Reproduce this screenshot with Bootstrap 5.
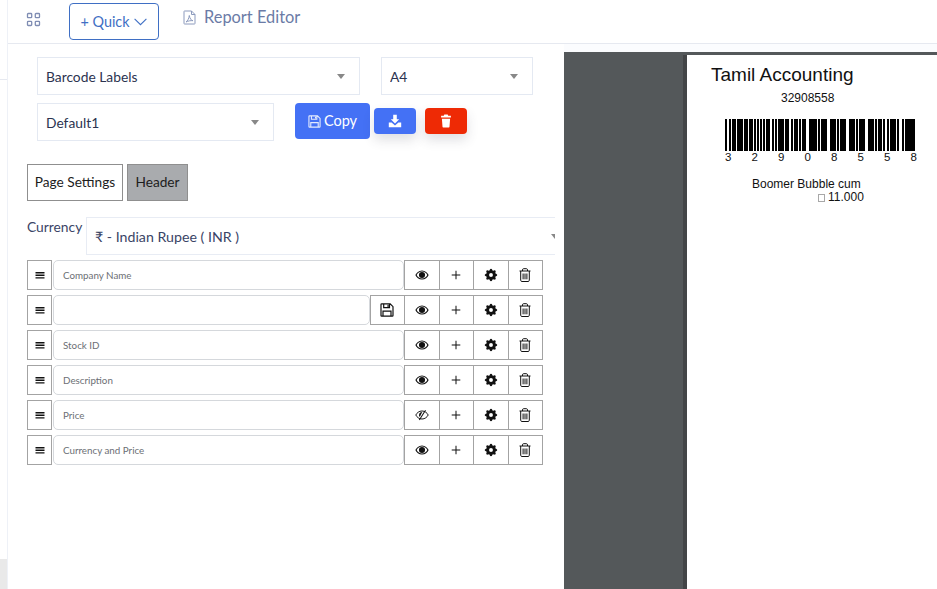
<!DOCTYPE html>
<html lang="en">
<head>
<meta charset="utf-8">
<title>Report Editor</title>
<link href="https://cdn.jsdelivr.net/npm/bootstrap@5.3.0/dist/css/bootstrap.min.css" rel="stylesheet">
<style>
html,body{height:100%;overflow:hidden}
body{width:937px;height:589px;background:#fff;font-family:"Lato","Open Sans",sans-serif;color:#2b3350;display:flex}
.rail{width:8px;flex:none;border-right:1px solid #eef1f7;display:flex;flex-direction:column}
.rail-top{height:80px;border-bottom:1px solid #e6e9f0}
.rail-fill{flex:1}
.rail-end{height:30px;width:7px;background:#e9e9e9}
.shell{flex:1;min-width:0;display:flex;flex-direction:column}
.topbar{height:44px;flex:none;border-bottom:1px solid #e6e9f0;display:flex;align-items:flex-start;background:#fff}
.apps{margin:12px 0 0 18px;width:15px;height:15px;color:#7f8db3}
.quick{margin:3px 0 0 28px;width:90px;height:37px;border:1px solid #3f6fc4;border-radius:4px;color:#3f6fc4;font-size:14.4px;padding:0;display:flex;align-items:center;justify-content:center;gap:3px;background:#fff}
.quick svg{width:15px;height:15px}
.crumb{margin:7px 0 0 24px;color:#6b7ba6;font-size:16.4px;display:flex;align-items:center;gap:8px;line-height:20px}
.crumb svg{width:13px;height:15px;color:#8c9abd}
.stage{flex:1;display:flex;min-height:0;background:#fbfcfe}
.editor{width:556px;flex:none;background:#fff;overflow:hidden}
.sel{border:1px solid #e4e9f2;border-radius:0;height:38px;padding:2px 8px 0;font-size:13.8px;color:#2b3350;font-family:inherit;background-position:right 14px center;background-size:8px 5px;background-image:url("data:image/svg+xml,%3Csvg xmlns='http://www.w3.org/2000/svg' viewBox='0 0 10 6'%3E%3Cpath fill='%23888' d='M0 0h10L5 6z'/%3E%3C/svg%3E")}
.top-row{display:flex;padding:13px 0 0 29px;gap:21px}
.second-row{display:flex;padding:8px 0 0 29px;align-items:flex-start}
.w-a{width:323px}.w-b{width:152px}.w-c{width:237px}
.copy-b{margin-left:21px;width:75px;height:36px;background:#4471f5;border:0;border-radius:4px;color:#fff;font-size:14.5px;padding:0;display:flex;align-items:center;justify-content:center;gap:3px}
.copy-b svg{width:13px;height:13px;opacity:.85}
.ico-b{margin-top:5px;width:42px;height:26px;border:0;border-radius:4px;color:#fff;padding:0;display:flex;align-items:center;justify-content:center;box-shadow:0 6px 12px rgba(60,60,80,.16)}
.ico-b svg{width:14px;height:14px}
.b-blue{background:#4471f5;margin-left:4px}
.b-red{background:#ee2a05;margin-left:9px}
.tabs-row{display:flex;gap:4px;padding:23px 0 0 19px}
.tab-b{height:37px;border:1px solid #8f8f8f;border-radius:0;background:#fff;color:#1d1d1d;font-size:13.7px;padding:0;display:flex;align-items:center;justify-content:center}
.tab-1{width:96px}.tab-2{width:61px;background:#a9abae}
.cur-row{display:flex;padding:16px 0 0 19px;gap:5px;align-items:flex-start}
.cur-label{font-size:13.8px;color:#3a4466;line-height:20px;width:54px}
.cur-sel{height:38px;width:469px;flex:none;border:1px solid #e8ecf4;border-right:0;padding:2px 8px 0;display:flex;align-items:center;font-size:14.2px;color:#3a4466;background:url("data:image/svg+xml,%3Csvg xmlns='http://www.w3.org/2000/svg' viewBox='0 0 10 6'%3E%3Cpath fill='%23888' d='M0 0h10L5 6z'/%3E%3C/svg%3E") no-repeat right -4px center/8px 5px}
.fields{padding:5px 0 0 19px;width:535px;display:flex;flex-direction:column;gap:5px}
.frow{display:flex;height:30px}
.sq{height:30px;border:1px solid #a3a3a3;background:#fff;color:#111;padding:0;border-radius:0;display:flex;align-items:center;justify-content:center;margin-left:-1px;flex:none}
.sq svg{width:14px;height:14px}
.sq-h{width:25px;margin-left:0}
.sq-a{width:35.5px}
.fin{flex:1;min-width:0;height:30px;border:1px solid #d5d8dc;border-radius:5px;font-size:9.8px;color:#6c6f75;padding:1px 9px 0;margin-left:1px;display:flex;align-items:center;background:#fff}
.frow .sq-e{margin-left:0}
.viewer{flex:1;background:#54585a;margin-top:8px;padding-top:3px;padding-left:123px;display:flex;min-width:0}
.sheet{flex:1;background:#fff;box-shadow:-4px 0 0 #434547;font-family:"Liberation Sans",Arial,sans-serif;color:#111;padding:8px 0 0 24px;min-width:0}
.s-title{font-size:19px;line-height:24px;color:#111}
.s-num{font-size:12px;line-height:14px;margin:4px 0 0 70px}
.bars{display:block;margin:14px 0 0 14px;width:190px;height:32px}
.digits{display:flex;justify-content:space-between;margin:0 0 0 14px;width:192px;font-size:11.5px;line-height:13px}
.s-name{font-size:12px;line-height:13px;margin:14px 0 0 41px}
.s-price{font-size:12px;line-height:13px;margin:0 0 0 107px;display:flex;align-items:center;gap:3px}
.tofu{width:7px;height:8px;border:1px solid #a8a8a8;display:inline-block;margin-top:1px}
</style>
</head>
<body>
<svg width="0" height="0" class="position-absolute">
<symbol id="i-bars" viewBox="0 0 14 14"><path fill="currentColor" d="M2.500 4h9v1.400h-9zM2.500 6.600h9V8h-9zM2.500 9.200h9v1.400h-9z"/></symbol>
<symbol id="i-eye" viewBox="0 0 16 16"><path fill="currentColor" d="M8 2.800C4.400 2.800 1.600 5.400.4 8c1.200 2.600 4 5.200 7.600 5.200s6.400-2.600 7.600-5.200C14.400 5.400 11.600 2.800 8 2.800zm0 9.200C5.300 12 3.100 10.300 1.900 8 3.100 5.700 5.300 4 8 4s4.900 1.700 6.100 4c-1.200 2.300-3.400 4-6.100 4z"/><circle fill="currentColor" cx="8" cy="8" r="3.500"/></symbol>
<symbol id="i-eyeoff" viewBox="0 0 16 16"><path fill="none" stroke="currentColor" stroke-width="1.100" d="M.9 8C2.100 5.600 4.700 3.400 8 3.400c3.300 0 5.900 2.200 7.100 4.600-1.200 2.400-3.800 4.600-7.100 4.600C4.700 12.600 2.100 10.400.9 8z"/><path fill="currentColor" d="M8 4.500a3.500 3.500 0 0 0-2.600 5.800L8.300 4.500z"/><path fill="currentColor" d="M11.500 2.200 4.400 13.300l1 .6 7.100-11.100z"/></symbol>
<symbol id="i-plus" viewBox="0 0 14 14"><path fill="currentColor" d="M6.500 2.700h1v3.800h3.800v1H7.500v3.800h-1V7.500H2.700v-1h3.800z"/></symbol>
<symbol id="i-gear" viewBox="-1 -1 18 18"><path fill="currentColor" d="M9.405 1.050c-.413-1.400-2.397-1.400-2.810 0l-.1.340a1.464 1.464 0 0 1-2.105.872l-.31-.17c-1.283-.698-2.686.705-1.987 1.987l.169.311c.446.820.023 1.841-.872 2.105l-.34.1c-1.400.413-1.400 2.397 0 2.810l.34.1a1.464 1.464 0 0 1 .872 2.105l-.17.310c-.698 1.283.705 2.686 1.987 1.987l.311-.169a1.464 1.464 0 0 1 2.105.872l.1.340c.413 1.400 2.397 1.400 2.810 0l.1-.340a1.464 1.464 0 0 1 2.105-.872l.310.170c1.283.698 2.686-.705 1.987-1.987l-.169-.311a1.464 1.464 0 0 1 .872-2.105l.340-.1c1.400-.413 1.400-2.397 0-2.810l-.340-.1a1.464 1.464 0 0 1-.872-2.105l.170-.310c.698-1.283-.705-2.686-1.987-1.987l-.311.169a1.464 1.464 0 0 1-2.105-.872l-.1-.340zM8 10.500a2.500 2.500 0 1 1 0-5 2.500 2.500 0 0 1 0 5z"/></symbol>
<symbol id="i-trash" viewBox="1 1 14 14"><path fill="none" stroke="currentColor" stroke-width="1" d="M2.500 4h11M5.500 4V2.800c0-.6.400-1.100 1-1.100h3c.600 0 1 .500 1 1.100V4M3.700 4v9.300c0 .7.500 1.200 1.200 1.200h6.200c.7 0 1.200-.5 1.200-1.200V4M6.100 6.500v5.800M8 6.500v5.800M9.900 6.500v5.800"/></symbol>
<symbol id="i-save" viewBox="1 1 14 14"><path fill="none" stroke="currentColor" stroke-width="1.200" d="M2 2.600c0-.4.300-.7.700-.7h8.500l2.800 2.800v8.700c0 .4-.3.700-.7.700H2.700c-.4 0-.7-.3-.7-.7zM4.700 2v3.600h5.800V2M4 14V9.200h8V14"/><path fill="currentColor" d="M8.500 2.700h1.200v2.200H8.500z"/></symbol>
</svg>

<div class="rail"><div class="rail-top"></div><div class="rail-fill"></div><div class="rail-end"></div></div>

<div class="shell">
  <div class="topbar">
    <svg class="apps" viewBox="0 0 15 15" fill="none" stroke="currentColor" stroke-width="1.300"><rect x="1.500" y="1.500" width="4.200" height="4.200" rx=".8"/><rect x="9.300" y="1.500" width="4.200" height="4.200" rx=".8"/><rect x="1.500" y="9.300" width="4.200" height="4.200" rx=".8"/><rect x="9.300" y="9.300" width="4.200" height="4.200" rx=".8"/></svg>
    <button type="button" class="btn quick">+ Quick <svg viewBox="0 0 14 14" fill="none" stroke="currentColor" stroke-width="1"><path d="M1.500 4.500 7 10l5.500-5.500"/></svg></button>
    <div class="crumb"><svg viewBox="0 0 13 15" fill="none" stroke="currentColor" stroke-width="1"><path d="M1 1.500c0-.3.200-.5.500-.5h7L12 4.500v9c0 .3-.2.500-.5.500h-10c-.3 0-.5-.2-.5-.5zM8.500 1v3.500H12M3 12c1.500-1 3-3.500 3.300-6.500.5 3 2 5 3.700 5.200-2.500-.3-5 .3-7 1.300z"/></svg><span>Report Editor</span></div>
  </div>
  <div class="stage">
    <div class="editor">
      <div class="top-row">
        <select class="form-select sel w-a"><option>Barcode Labels</option></select>
        <select class="form-select sel w-b"><option>A4</option></select>
      </div>
      <div class="second-row">
        <select class="form-select sel w-c"><option>Default1</option></select>
        <button type="button" class="btn copy-b"><svg><use href="#i-save"/></svg>Copy</button>
        <button type="button" class="btn ico-b b-blue" aria-label="Download"><svg viewBox="0 0 14 14"><path fill="#fff" d="M5.200.8h3.600v4.400h2.400L7 9.400 2.800 5.200h2.400zM.8 8.500h2.800L7 11.500l3.400-3h2.800v4.700H.8z"/></svg></button>
        <button type="button" class="btn ico-b b-red" aria-label="Delete"><svg viewBox="0 0 14 14"><path fill="#fff" d="M5.300.6h3.400l.5 1.200h2.700v1.800H2.100V1.800h2.700zM2.900 4.800h8.200l-.6 8c0 .4-.3.700-.7.700H4.200c-.4 0-.7-.3-.7-.7z"/></svg></button>
      </div>
      <div class="tabs-row">
        <button type="button" class="btn tab-b tab-1">Page Settings</button>
        <button type="button" class="btn tab-b tab-2">Header</button>
      </div>
      <div class="cur-row">
        <div class="cur-label">Currency</div>
        <div class="cur-sel">₹ - Indian Rupee ( INR )</div>
      </div>
      <div class="fields">
        <div class="frow"><button class="btn sq sq-h" aria-label="Move"><svg><use href="#i-bars"/></svg></button><div class="fin">Company Name</div><button class="btn sq sq-a sq-e" aria-label="Show"><svg><use href="#i-eye"/></svg></button><button class="btn sq sq-a" aria-label="Add"><svg><use href="#i-plus"/></svg></button><button class="btn sq sq-a" aria-label="Settings"><svg><use href="#i-gear"/></svg></button><button class="btn sq sq-a" aria-label="Delete"><svg><use href="#i-trash"/></svg></button></div>
        <div class="frow"><button class="btn sq sq-h" aria-label="Move"><svg><use href="#i-bars"/></svg></button><div class="fin"></div><button class="btn sq sq-a sq-e" aria-label="Save"><svg><use href="#i-save"/></svg></button><button class="btn sq sq-a" aria-label="Show"><svg><use href="#i-eye"/></svg></button><button class="btn sq sq-a" aria-label="Add"><svg><use href="#i-plus"/></svg></button><button class="btn sq sq-a" aria-label="Settings"><svg><use href="#i-gear"/></svg></button><button class="btn sq sq-a" aria-label="Delete"><svg><use href="#i-trash"/></svg></button></div>
        <div class="frow"><button class="btn sq sq-h" aria-label="Move"><svg><use href="#i-bars"/></svg></button><div class="fin">Stock ID</div><button class="btn sq sq-a sq-e" aria-label="Show"><svg><use href="#i-eye"/></svg></button><button class="btn sq sq-a" aria-label="Add"><svg><use href="#i-plus"/></svg></button><button class="btn sq sq-a" aria-label="Settings"><svg><use href="#i-gear"/></svg></button><button class="btn sq sq-a" aria-label="Delete"><svg><use href="#i-trash"/></svg></button></div>
        <div class="frow"><button class="btn sq sq-h" aria-label="Move"><svg><use href="#i-bars"/></svg></button><div class="fin">Description</div><button class="btn sq sq-a sq-e" aria-label="Show"><svg><use href="#i-eye"/></svg></button><button class="btn sq sq-a" aria-label="Add"><svg><use href="#i-plus"/></svg></button><button class="btn sq sq-a" aria-label="Settings"><svg><use href="#i-gear"/></svg></button><button class="btn sq sq-a" aria-label="Delete"><svg><use href="#i-trash"/></svg></button></div>
        <div class="frow"><button class="btn sq sq-h" aria-label="Move"><svg><use href="#i-bars"/></svg></button><div class="fin">Price</div><button class="btn sq sq-a sq-e" aria-label="Hide"><svg><use href="#i-eyeoff"/></svg></button><button class="btn sq sq-a" aria-label="Add"><svg><use href="#i-plus"/></svg></button><button class="btn sq sq-a" aria-label="Settings"><svg><use href="#i-gear"/></svg></button><button class="btn sq sq-a" aria-label="Delete"><svg><use href="#i-trash"/></svg></button></div>
        <div class="frow"><button class="btn sq sq-h" aria-label="Move"><svg><use href="#i-bars"/></svg></button><div class="fin">Currency and Price</div><button class="btn sq sq-a sq-e" aria-label="Show"><svg><use href="#i-eye"/></svg></button><button class="btn sq sq-a" aria-label="Add"><svg><use href="#i-plus"/></svg></button><button class="btn sq sq-a" aria-label="Settings"><svg><use href="#i-gear"/></svg></button><button class="btn sq sq-a" aria-label="Delete"><svg><use href="#i-trash"/></svg></button></div>
      </div>
    </div>
    <div class="viewer">
      <div class="sheet">
        <div class="s-title">Tamil Accounting</div>
        <div class="s-num">32908558</div>
        <svg class="bars" viewBox="0 0 190 32" id="bc" shape-rendering="crispEdges" aria-label="barcode"></svg>
        <div class="digits"><span>3</span><span>2</span><span>9</span><span>0</span><span>8</span><span>5</span><span>5</span><span>8</span></div>
        <div class="s-name">Boomer Bubble cum</div>
        <div class="s-price"><span class="tofu"></span><span>11.000</span></div>
      </div>
    </div>
  </div>
</div>
<script>
var P={'0':'nnnwwnwnn','2':'nnwwnnnnw','3':'wnwwnnnnn','5':'wnnwwnnnn','8':'wnnwnnwnn','9':'nnwwnnwnn','*':'nwnnwnwnn'};
var s='*32908558*',x=0,n=1.47,w=2.95,h='';
for(var c of s){var p=P[c];for(var i=0;i<9;i++){var d=p[i]=='w'?w:n;if(i%2==0)h+='<rect x="'+Math.round(x)+'" y="0" width="'+Math.round(d+.7)+'" height="32"/>';x+=d;}x+=n;}
document.getElementById('bc').innerHTML=h;
</script>
<script src="https://cdn.jsdelivr.net/npm/bootstrap@5.3.0/dist/js/bootstrap.bundle.min.js"></script>
</body>
</html>
